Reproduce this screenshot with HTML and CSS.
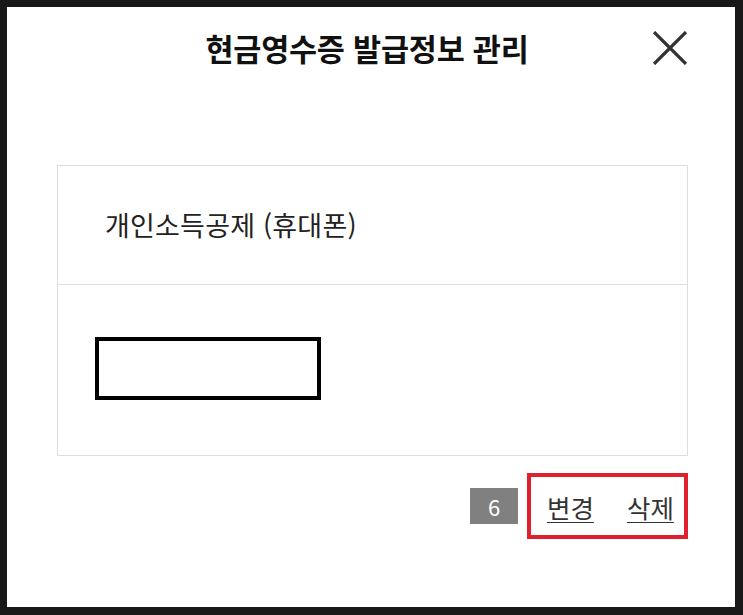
FILE: index.html
```html
<!DOCTYPE html>
<html lang="ko">
<head>
<meta charset="utf-8">
<link rel="stylesheet" href="styles.css">
</head>
<body>
<div class="frame">
  <div class="panel">
    <header class="head">
      <span></span>
      <h1 class="title">현금영수증 발급정보 관리</h1>
      <button class="close" aria-label="닫기">
        <svg width="36" height="34" viewBox="0 0 36 34"><path d="M2 1 L34 33 M34 1 L2 33" stroke="#333" stroke-width="3.2" fill="none"/></svg>
      </button>
    </header>
    <section class="card">
      <div class="row row-type">개인소득공제 (휴대폰)</div>
      <div class="row row-num"><div class="redact"></div></div>
    </section>
    <div class="actions">
      <span class="badge">6</span>
      <div class="links">
        <a href="#" class="link">변경</a>
        <a href="#" class="link">삭제</a>
      </div>
    </div>
  </div>
</div>
</body>
</html>
```
FILE: styles.css
```css
* { box-sizing: border-box; }
html, body { margin: 0; padding: 0; }
body {
  background: #181818;
  font-family: "Noto Sans CJK KR", "Noto Sans", sans-serif;
  width: 743px;
  height: 615px;
  overflow: hidden;
}
.frame {
  padding: 7px 8px 8px 7px;
  height: 615px;
}
.panel {
  background: #fff;
  height: 600px;
  display: flex;
  flex-direction: column;
}
.head {
  height: 82px;
  display: grid;
  grid-template-columns: 1fr auto 1fr;
  align-items: center;
}
.title {
  margin: 0;
  font-size: 30.5px;
  font-weight: 700;
  color: #111;
  letter-spacing: -0.2px;
  transform: translateX(-4px);
}
.close {
  justify-self: end;
  margin-right: 47px;
  background: none;
  border: 0;
  padding: 0;
  width: 36px;
  height: 34px;
  display: flex;
}
.card {
  margin: 76px 47px 0 50px;
  border: 1px solid #ddd;
}
.row-type {
  height: 119px;
  border-bottom: 1px solid #ddd;
  display: flex;
  align-items: center;
  padding-left: 47px;
  font-size: 27px;
  letter-spacing: 0.2px;
  color: #222;
  padding-bottom: 2px;
}
.row-num {
  height: 170px;
  padding: 52px 0 0 37px;
}
.redact {
  width: 226px;
  height: 63px;
  border: 4.5px solid #000;
}
.actions {
  display: flex;
  justify-content: flex-end;
  align-items: center;
  gap: 9px;
  margin: 17px 47px 0 0;
}
.badge {
  width: 48px;
  height: 36px;
  background: #808080;
  color: #fff;
  font-size: 22px;
  display: flex;
  align-items: center;
  justify-content: center;
}
.links {
  width: 161px;
  height: 66px;
  border: 4px solid #e0202c;
  display: flex;
  align-items: center;
  gap: 33px;
  padding-left: 16px;
}
.link {
  font-size: 25.5px;
  color: #333;
  text-decoration: underline;
  text-underline-offset: 4px;
  text-decoration-thickness: 1px;
}
```
